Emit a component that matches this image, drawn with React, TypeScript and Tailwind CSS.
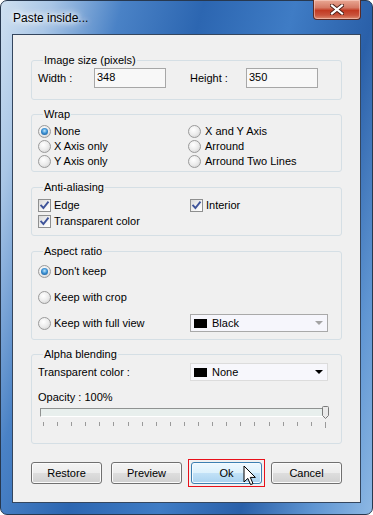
import React from 'react';

function Radio({ checked }: { checked?: boolean }) {
  return (
    <span className="w-[13px] h-[13px] shrink-0 rounded-full border border-[#9a9a9a] bg-[radial-gradient(circle_at_40%_35%,#ffffff_0%,#ececec_50%,#cdcdcd_100%)] flex items-center justify-center">
      {checked && (
        <span className="w-[7px] h-[7px] rounded-full bg-[radial-gradient(circle_at_50%_40%,#bfe6fc_0%,#3d92d4_45%,#0c4a88_100%)]" />
      )}
    </span>
  );
}

function Checkbox() {
  return (
    <span className="w-[13px] h-[13px] shrink-0 border border-[#8e8f8f] bg-[linear-gradient(135deg,#d9d9d9_0%,#f4f4f4_60%,#ffffff_100%)] flex items-center justify-center">
      <svg width="11" height="11" viewBox="0 0 11 11">
        <path d="M2.2 5.6 L4.4 8 L8.9 2.4" fill="none" stroke="#3f549a" strokeWidth="1.9" strokeLinecap="square" />
      </svg>
    </span>
  );
}

function Combo({ label, dim }: { label: string; dim?: boolean }) {
  return (
    <div
      className={
        dim
          ? 'w-[138px] h-[18px] border border-[#a9a9a9] bg-[#f6f6fc] flex items-center pl-[3px] pr-[4px]'
          : 'w-[138px] h-[18px] border border-[#dcdcdc] bg-[#f7f7fc] flex items-center pl-[3px] pr-[4px]'
      }
    >
      <span className="w-[13px] h-[9px] bg-black" />
      <span className="ml-[5px]">{label}</span>
      <svg className="ml-auto" width="8" height="4" viewBox="0 0 8 4">
        <path d="M0 0H8L4 4Z" fill={dim ? '#a3a3a3' : '#000'} />
      </svg>
    </div>
  );
}

function Group({ title, className, children }: { title: string; className: string; children: React.ReactNode }) {
  return (
    <fieldset className={`border border-[#d5dfe5] rounded-[3px] px-[6px] ${className}`}>
      <legend className="ml-[5px] px-[1px] leading-[13px]">{title}</legend>
      {children}
    </fieldset>
  );
}

function Button({ label, hot }: { label: string; hot?: boolean }) {
  return (
    <div
      className={
        hot
          ? 'relative w-[71px] h-[22px] rounded-[3px] border border-[#3c7fb1] bg-[linear-gradient(#eef8fe_0%,#dcf1fc_50%,#c2e2f7_50%,#a9d3f0_100%)] shadow-[inset_0_0_0_1px_#f4fbff] flex items-center justify-center'
          : 'relative w-[71px] h-[22px] rounded-[3px] border border-[#707070] bg-[linear-gradient(#f4f4f4_0%,#ececec_50%,#dedede_50%,#d0d0d0_100%)] shadow-[inset_0_0_0_1px_#fbfbfb] flex items-center justify-center'
      }
    >
      {label}
      {hot && (
        <>
          <span className="absolute -inset-[4px] border border-[#e8101a]" />
          <svg className="absolute left-[51px] top-[2px]" width="14" height="21" viewBox="0 0 14 21">
            <path d="M1 1 L1 17 L4.8 13.4 L7.6 19.6 L10 18.6 L7.3 12.4 L12.4 12.4 Z" fill="#fff" stroke="#000" strokeWidth="1" strokeLinejoin="miter" />
          </svg>
        </>
      )}
    </div>
  );
}

export default function App() {
  const ticks = Array.from({ length: 21 }, (_, i) => i);

  return (
    <div className="w-[373px] h-[515px] bg-white font-['Liberation_Sans',Arial,sans-serif] text-[11px] text-black">
      <div className="w-[373px] h-[515px] rounded-[7px] border border-[#27384f] bg-[linear-gradient(105deg,#cfe0f1_0%,#a9c6e6_10%,#4a82c6_24%,#2c66b1_40%,#3f7cc5_58%,#2a60a9_74%,#5f95d2_88%,#8db8e4_100%)] flex flex-col">
        {/* title bar */}
        <div className="h-[33px] flex items-start">
          <span className="mt-[10px] ml-[12px] text-[12px] leading-[14px] [text-shadow:0_0_5px_#ffffff,0_0_9px_#ffffff,0_0_12px_#ffffff]">
            Paste inside...
          </span>
          <div className="ml-auto mr-[11px] -mt-[1px] w-[48px] h-[20px] rounded-b-[4px] border border-[#5a2a24] border-t-0 bg-[linear-gradient(#e9a894_0%,#d57a65_40%,#c23a22_55%,#c9533c_80%,#dc8b70_100%)] shadow-[inset_0_0_0_1px_rgba(255,220,210,0.5)] flex items-center justify-center">
            <svg width="14" height="11" viewBox="0 0 14 11">
              <path d="M2 1.5 L12 9.5 M12 1.5 L2 9.5" stroke="#4a1d16" strokeWidth="4" strokeLinecap="square" />
              <path d="M2 1.5 L12 9.5 M12 1.5 L2 9.5" stroke="#ffffff" strokeWidth="2.2" strokeLinecap="square" />
            </svg>
          </div>
        </div>

        {/* client area */}
        <div className="mx-[11px] h-[469px] border border-[#34465e] bg-[#f0f0f0] px-[18px] flex flex-col">
          <Group title="Image size (pixels)" className="mt-[19px] h-[46px]">
            <div className="mt-[1px] h-[20px] flex items-center">
              <span className="w-[56px]">Width :</span>
              <div className="w-[72px] h-[20px] border border-[#a7a7a7] bg-[#f8f8f8] pl-[2px] pb-[1px] flex items-center">348</div>
              <span className="ml-[24px] w-[56px]">Height :</span>
              <div className="w-[72px] h-[20px] border border-[#a7a7a7] bg-[#f8f8f8] pl-[2px] pb-[1px] flex items-center">350</div>
            </div>
          </Group>

          <Group title="Wrap" className="mt-[8px] h-[64px]">
            <div className="pt-[3px] grid grid-cols-[150px_1fr]">
              <div className="h-[15px] flex items-center gap-[3px]"><Radio checked />None</div>
              <div className="h-[15px] flex items-center gap-[4px]"><Radio />X and Y Axis</div>
              <div className="h-[15px] flex items-center gap-[3px]"><Radio />X Axis only</div>
              <div className="h-[15px] flex items-center gap-[4px]"><Radio />Arround</div>
              <div className="h-[15px] flex items-center gap-[3px]"><Radio />Y Axis only</div>
              <div className="h-[15px] flex items-center gap-[4px]"><Radio />Arround Two Lines</div>
            </div>
          </Group>

          <Group title="Anti-aliasing" className="mt-[9px] h-[55px]">
            <div className="pt-[3px] grid grid-cols-[152px_1fr]">
              <div className="h-[16px] flex items-center gap-[3px]"><Checkbox />Edge</div>
              <div className="h-[16px] flex items-center gap-[3px]"><Checkbox />Interior</div>
              <div className="h-[16px] flex items-center gap-[3px]"><Checkbox />Transparent color</div>
            </div>
          </Group>

          <Group title="Aspect ratio" className="mt-[9px] h-[95px]">
            <div className="h-[26px] flex items-center gap-[3px]"><Radio checked />Don't keep</div>
            <div className="h-[26px] flex items-center gap-[3px]"><Radio />Keep with crop</div>
            <div className="h-[26px] flex items-center">
              <span className="w-[152px] flex items-center gap-[3px]"><Radio />Keep with full view</span>
              <Combo label="Black" dim />
            </div>
          </Group>

          <Group title="Alpha blending" className="mt-[8px] h-[96px]">
            <div className="mt-[2px] h-[18px] flex items-center">
              <span className="w-[152px]">Transparent color :</span>
              <Combo label="None" />
            </div>
            <div className="mt-[10px] h-[13px] leading-[13px]">Opacity : 100%</div>
            <div className="relative mt-[2px] ml-[2px] w-[289px] h-[13px] flex items-center">
              <div className="w-[287px] h-[9px] border-t border-l border-[#8f9291] border-b border-r border-b-[#ffffff] border-r-[#ffffff] bg-[#e8efed]" />
              <svg className="absolute right-0 top-0" width="7" height="13" viewBox="0 0 7 13">
                <path d="M0.5 1.5 Q0.5 0.5 1.5 0.5 L5.5 0.5 Q6.5 0.5 6.5 1.5 L6.5 9.5 L3.5 12.5 L0.5 9.5 Z" fill="#eaeaea" stroke="#7b7b7b" strokeWidth="1" />
              </svg>
            </div>
            <div className="mt-[3px] ml-[5px] w-[283px] flex justify-between items-start">
              {ticks.map((t) => (
                <span key={t} className={t === 20 ? 'w-px h-[6px] bg-[#9a9a9a]' : 'w-px h-[4px] bg-[#9a9a9a]'} />
              ))}
            </div>
          </Group>

          <div className="mt-[18px] flex justify-between">
            <Button label="Restore" />
            <Button label="Preview" />
            <Button label="Ok" hot />
            <Button label="Cancel" />
          </div>
        </div>
      </div>
    </div>
  );
}
